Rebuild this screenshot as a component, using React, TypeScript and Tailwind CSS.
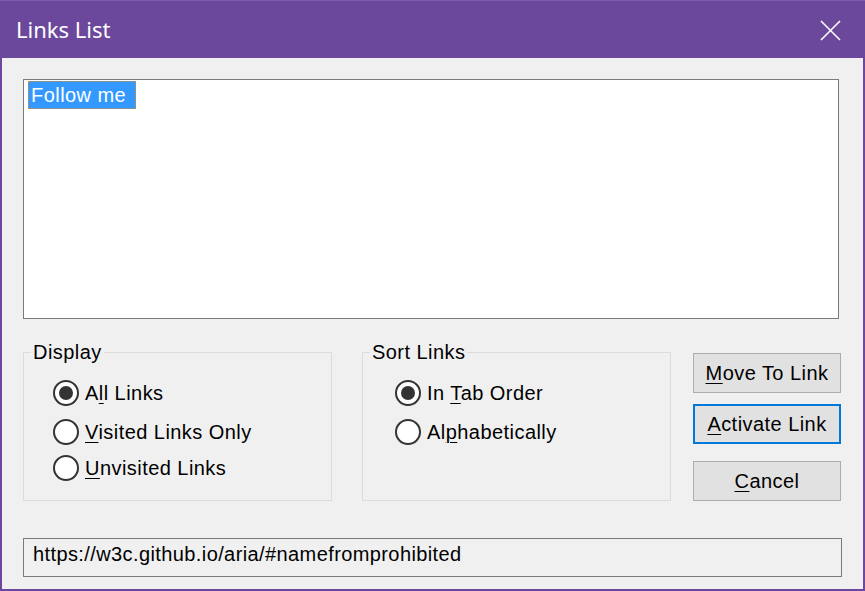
import React from "react";

const ui = { fontFamily: '"Liberation Sans", Arial, sans-serif' };

const Radio = ({ checked }: { checked?: boolean }) => (
  <div className="w-[26px] h-[26px] rounded-full border-2 border-[#333333] bg-white flex items-center justify-center flex-none">
    {checked && <div className="w-[14px] h-[14px] rounded-full bg-[#333333]" />}
  </div>
);

const Key = ({ children }: { children: React.ReactNode }) => (
  <span className="underline decoration-1 underline-offset-[3px]">{children}</span>
);

type Opt = { label: React.ReactNode; checked?: boolean; mt: string };

const Group = ({ title, opts, pad }: { title: string; opts: Opt[]; pad: string }) => (
  <fieldset className="w-[309px] h-[161px] border border-[#dcdcdc] m-0 p-0">
    <legend className="ml-[7px] px-[2px] text-[20px] leading-[24px] text-black">{title}</legend>
    <div className={"flex flex-col " + pad}>
      {opts.map((o, i) => (
        <div key={i} className={"flex items-center gap-[6px] h-[26px] " + o.mt}>
          <Radio checked={o.checked} />
          <span className="text-[20px] leading-[24px] text-black">{o.label}</span>
        </div>
      ))}
    </div>
  </fieldset>
);

export default function App() {
  return (
    <div className="w-[865px] h-[591px] flex flex-col bg-[#6b489b] border-t border-[#7b5cae]" style={ui}>
      <div className="h-[57px] flex items-center justify-between pl-4 pr-[24px]">
        <span
          className="text-white text-[22px] leading-none pb-[2px]"
          style={{ fontFamily: '"Noto Sans", "Open Sans", sans-serif' }}
        >
          Links List
        </span>
        <svg width="21" height="21" viewBox="0 0 21 21" className="mt-[1px]">
          <path d="M1 1 L20 20 M20 1 L1 20" stroke="white" strokeWidth="1.6" />
        </svg>
      </div>

      <div className="flex-1 mx-[2px] mb-[2px] bg-[#f0f0f0] pl-[21px] pt-[21px] flex flex-col tracking-[0.45px]">
        <div className="w-[816px] h-[240px] bg-white border border-[#7a7a7a] pl-[4px] pt-[1px]">
          <div className="inline-flex items-center h-[28px] w-[108px] pl-[2px] bg-[#3399ff] border border-dotted border-[#d88a3a] text-white text-[20px]">
            Follow me
          </div>
        </div>

        <div className="flex mt-[21px]">
          <Group
            title="Display"
            pad="pl-[29px]"
            opts={[
              { label: <>A<Key>l</Key>l Links</>, checked: true, mt: "mt-[16px]" },
              { label: <><Key>V</Key>isited Links Only</>, mt: "mt-[13px]" },
              { label: <><Key>U</Key>nvisited Links</>, mt: "mt-[10px]" },
            ]}
          />
          <div className="ml-[30px]">
            <Group
              title="Sort Links"
              pad="pl-[32px]"
              opts={[
                { label: <>In <Key>T</Key>ab Order</>, checked: true, mt: "mt-[16px]" },
                { label: <>Al<Key>p</Key>habetically</>, mt: "mt-[13px]" },
              ]}
            />
          </div>
          <div className="ml-[22px] mt-[13px] flex flex-col">
            <button className="w-[148px] h-[40px] bg-[#e1e1e1] border border-[#adadad] text-[20px] text-black">
              <Key>M</Key>ove To Link
            </button>
            <button className="w-[148px] h-[40px] mt-[11px] bg-[#e1e1e1] border-2 border-[#0078d7] text-[20px] text-black">
              <Key>A</Key>ctivate Link
            </button>
            <button className="w-[148px] h-[40px] mt-[17px] bg-[#e1e1e1] border border-[#adadad] text-[20px] text-black">
              <Key>C</Key>ancel
            </button>
          </div>
        </div>

        <div className="w-[819px] h-[39px] mt-[37px] border border-[#7a7a7a] flex items-center pl-[9px] pb-[8px] text-[20px] tracking-[0.4px] text-black">
          https://w3c.github.io/aria/#namefromprohibited
        </div>
      </div>
    </div>
  );
}
